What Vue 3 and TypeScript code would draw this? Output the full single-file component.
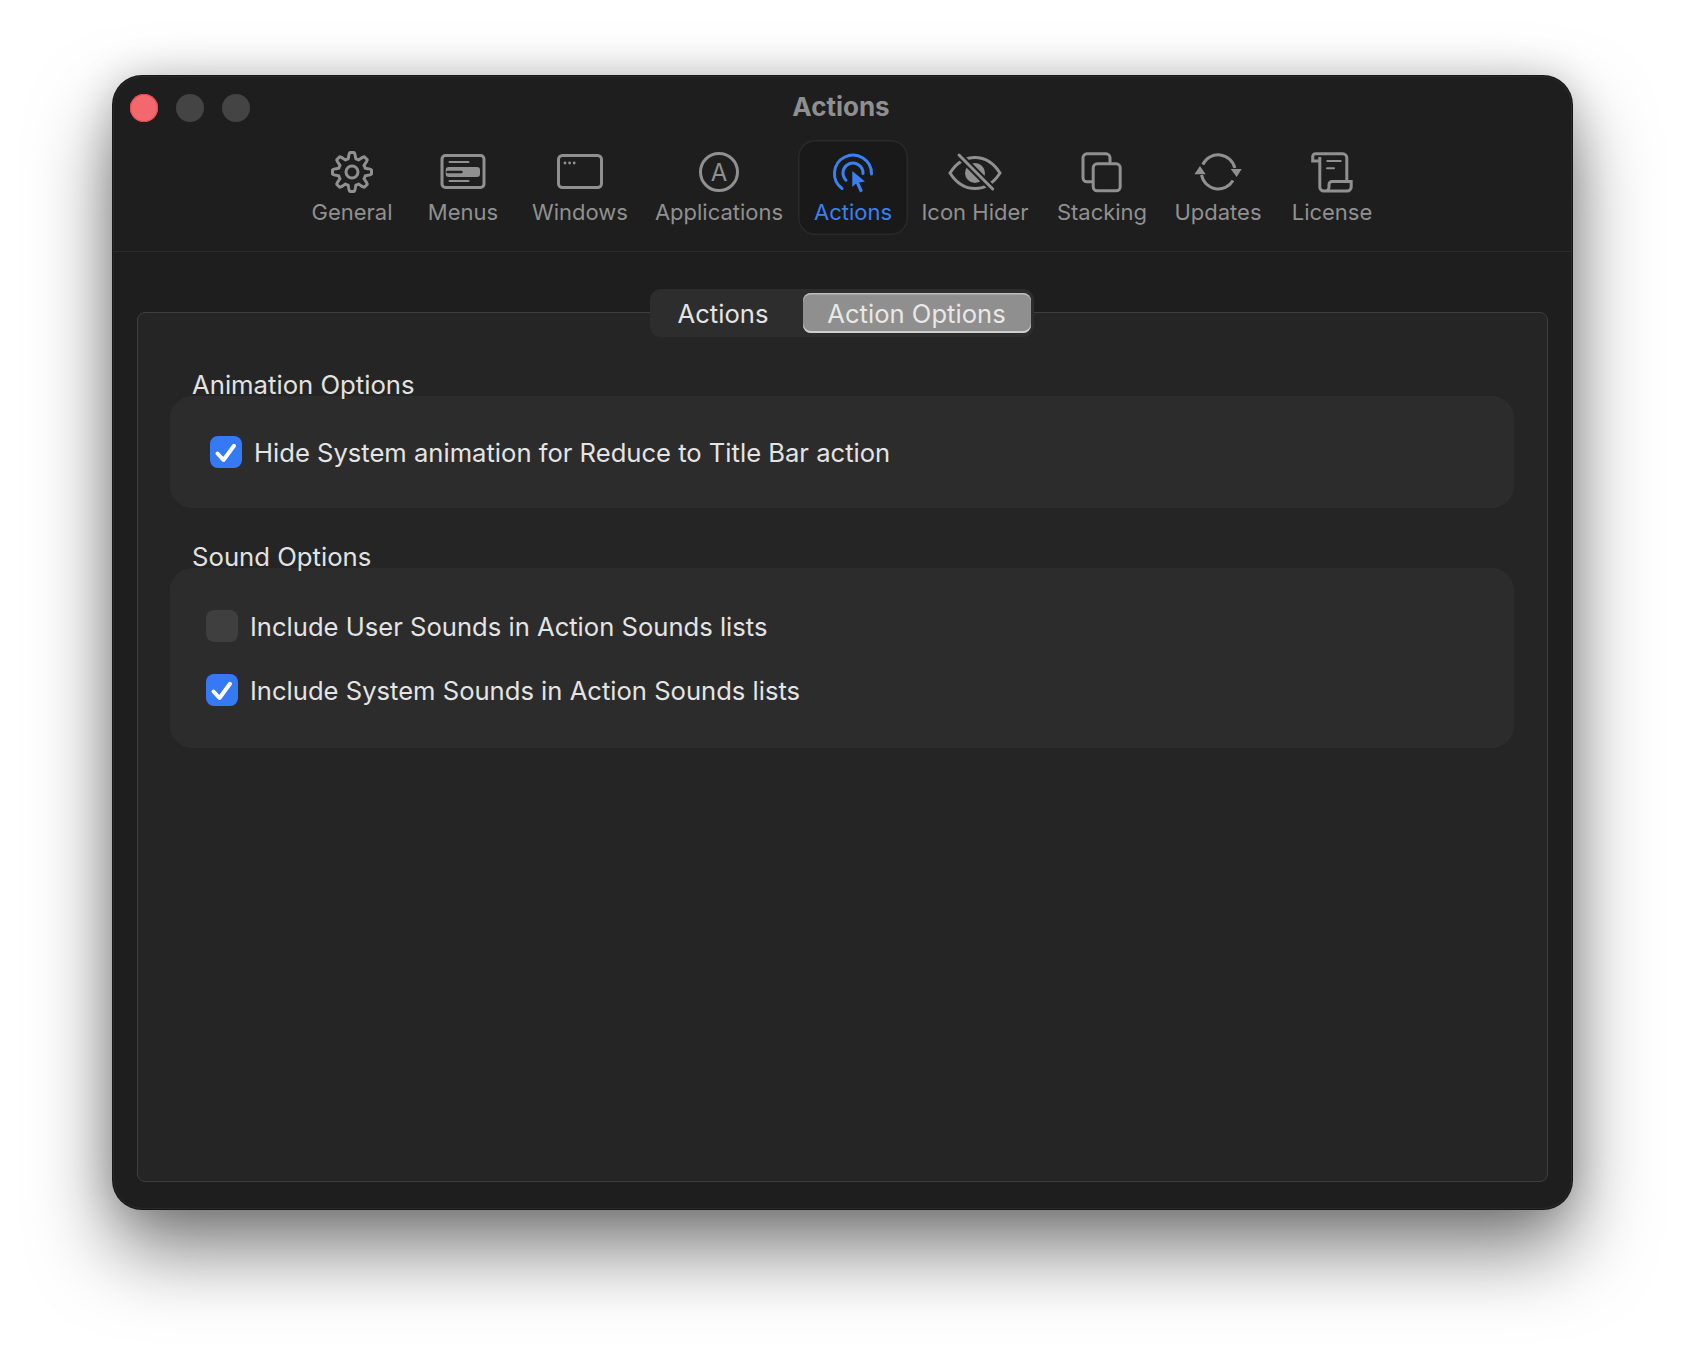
<script setup lang="ts">
const gear = (() => {
  const pts: string[] = []
  const n = 240
  for (let i = 0; i < n; i++) {
    const a = (i / n) * Math.PI * 2 + Math.PI / 2
    const c = Math.cos(8 * (a - Math.PI / 2))
    const s = Math.max(-1, Math.min(1, c * 1.7))
    const r = 16.6 + 2.9 * s
    pts.push(`${(25 + r * Math.cos(a)).toFixed(2)} ${(25 + r * Math.sin(a)).toFixed(2)}`)
  }
  return 'M' + pts.join('L') + 'Z'
})()

const tools = [
  { id: 'general', label: 'General' },
  { id: 'menus', label: 'Menus' },
  { id: 'windows', label: 'Windows' },
  { id: 'applications', label: 'Applications' },
  { id: 'actions', label: 'Actions' },
  { id: 'hider', label: 'Icon Hider' },
  { id: 'stacking', label: 'Stacking' },
  { id: 'updates', label: 'Updates' },
  { id: 'license', label: 'License' },
]
</script>

<template>
  <div class="page">
    <div class="window">
      <header class="header">
        <div class="titlebar">
          <div class="lights">
            <span class="light red"></span>
            <span class="light"></span>
            <span class="light"></span>
          </div>
          <div class="title">Actions</div>
        </div>
        <nav class="toolbar">
          <div v-for="t in tools" :key="t.id" class="tool" :class="{ active: t.id === 'actions' }">
            <svg class="icon" viewBox="0 0 50 50" width="50" height="50">
              <template v-if="t.id === 'general'">
                <path :d="gear" class="ln" />
                <circle cx="25" cy="25" r="6" class="ln" />
              </template>
              <template v-else-if="t.id === 'menus'">
                <rect x="4" y="8.5" width="42" height="32" rx="3.5" class="ln" />
                <rect x="7.7" y="20" width="34.3" height="10" rx="3" class="fl" />
                <path d="M9.5 25H23.5" class="gap" />
                <path d="M11.5 15H30.5M11.5 34H30.5" class="ln thin" />
              </template>
              <template v-else-if="t.id === 'windows'">
                <rect x="3.5" y="8.5" width="43" height="32" rx="4" class="ln" />
                <circle cx="10" cy="16" r="1.4" class="fl" />
                <circle cx="14.6" cy="16" r="1.4" class="fl" />
                <circle cx="19.2" cy="16" r="1.4" class="fl" />
              </template>
              <template v-else-if="t.id === 'applications'">
                <circle cx="25" cy="25" r="18.5" class="ln" />
                <text x="25" y="33.7" class="glyph" text-anchor="middle">A</text>
              </template>
              <template v-else-if="t.id === 'actions'">
                <path d="M14 41.5A18.5 18.5 0 1 1 43.5 27" class="ln round" />
                <path d="M18 33.2A10 10 0 1 1 35 26.5" class="ln round" />
                <path d="M24.3 24L24.3 40L28 36.5L32 45.5L35 44L31 35.5L37 34.5Z" class="fl" />
              </template>
              <template v-else-if="t.id === 'hider'">
                <path d="M0 26C7 15 16 10.5 25 10.5C34 10.5 43 15 50 26C43 37 34 41.5 25 41.5C16 41.5 7 37 0 26Z" class="ln" />
                <circle cx="25" cy="26" r="10" class="fl" />
                <path d="M9 8L42.7 42" class="gap wide" />
                <path d="M9 8L42.7 42" class="ln round" />
              </template>
              <template v-else-if="t.id === 'stacking'">
                <path d="M16 34.8H10a4 4 0 0 1-4-4V10.8a4 4 0 0 1 4-4H29a4 4 0 0 1 4 4V16" class="ln" />
                <rect x="16.2" y="16.8" width="27" height="27" rx="4" class="ln" />
              </template>
              <template v-else-if="t.id === 'updates'">
                <path d="M9.8 17.7A17 17 0 0 1 41.8 21" class="ln" />
                <path d="M8.6 28A17 17 0 0 0 40 33.5" class="ln" />
                <path d="M37.7 22H48.7L43.7 30Z" class="fl" />
                <path d="M7 19L1.3 27.3H12.7Z" class="fl" />
              </template>
              <template v-else>
                <path d="M39.8 33.5V10.8a4 4 0 0 0-4-4H8.5a2.8 2.8 0 0 0-2.8 2.8V14H12.8" class="ln" />
                <path d="M12.8 10V40a4 4 0 0 0 4 4H40a4 4 0 0 0 4.2-4V34.5H25a3 3 0 0 0-3 3V40a4 4 0 0 1-4 4" class="ln" />
                <path d="M20.3 14H33.7M20 21.3H27" class="ln thin" />
              </template>
            </svg>
            <span class="tool-label">{{ t.label }}</span>
          </div>
        </nav>
      </header>

      <main class="main">
        <section class="box">
          <div class="tabs">
            <div class="tab first">Actions</div>
            <div class="tab selected">Action Options</div>
          </div>

          <h2 class="heading first-heading">Animation Options</h2>
          <div class="group one">
            <label class="row">
              <span class="check on">
                <svg viewBox="0 0 32 32" width="32" height="32"><path d="M7.5 17.5L13.5 24L24 9.8" /></svg>
              </span>
              <span>Hide System animation for Reduce to Title Bar action</span>
            </label>
          </div>

          <h2 class="heading second-heading">Sound Options</h2>
          <div class="group two">
            <label class="row">
              <span class="check"></span>
              <span>Include User Sounds in Action Sounds lists</span>
            </label>
            <label class="row">
              <span class="check on">
                <svg viewBox="0 0 32 32" width="32" height="32"><path d="M7.5 17.5L13.5 24L24 9.8" /></svg>
              </span>
              <span>Include System Sounds in Action Sounds lists</span>
            </label>
          </div>
        </section>
      </main>
    </div>
  </div>
</template>

<style>
html, body { margin: 0; background: #fff; }
</style>

<style scoped>
.page {
  width: 1684px;
  height: 1358px;
  box-sizing: border-box;
  padding: 76px 112px 0 113px;
  background: #fff;
  font-family: Inter, "Liberation Sans", sans-serif;
  overflow: hidden;
}
.window {
  height: 1132.5px;
  border-radius: 29px;
  background: #1e1e1e;
  box-shadow: 0 0 0 1px #161616, inset 0 0 0 1px rgba(255, 255, 255, 0.05), 0 40px 80px rgba(0, 0, 0, 0.52), 0 0 40px rgba(0, 0, 0, 0.18);
  display: flex;
  flex-direction: column;
  overflow: hidden;
}
.header {
  height: 176px;
  box-sizing: border-box;
  border-bottom: 1px solid #2b2b2b;
}
.titlebar {
  height: 64px;
  position: relative;
  display: flex;
  align-items: center;
  justify-content: center;
}
.lights {
  position: absolute;
  left: 17px;
  top: 18px;
  display: flex;
  gap: 18px;
}
.light {
  width: 28px;
  height: 28px;
  border-radius: 50%;
  background: #444;
}
.light.red {
  background: #f2686c;
  box-shadow: inset 0 0 0 1px #e8474c;
}
.title {
  margin-top: -3px;
  margin-right: 3px;
  font-size: 26px;
  font-weight: 700;
  color: #8f8f8f;
}
.toolbar {
  display: grid;
  grid-template-columns: 108px 114px 120px 158px 110px 134px 120px 112px 116px;
  padding-left: 185px;
}
.tool {
  height: 95px;
  box-sizing: border-box;
  padding-top: 7px;
  display: flex;
  flex-direction: column;
  align-items: center;
  color: #909090;
  border-radius: 17px;
}
.tool.active {
  color: #3a80f2;
  background: #191919;
  box-shadow: inset 0 0 0 1.5px #2a2a2a;
}
.icon {
  flex: none;
  overflow: visible;
}
.ln {
  fill: none;
  stroke: currentColor;
  stroke-width: 3;
}
.ln.round { stroke-linecap: round; }
.ln.thin { stroke-width: 2; stroke-linecap: round; }
.fl { fill: currentColor; }
.gap {
  fill: none;
  stroke: #1e1e1e;
  stroke-width: 2.4;
  stroke-linecap: round;
}
.gap.wide { stroke-width: 7; stroke-linecap: butt; }
.glyph {
  fill: currentColor;
  font-size: 24px;
  font-family: Inter, sans-serif;
}
.tool-label {
  margin-top: 0.5px;
  font-size: 22px;
  line-height: 28px;
  white-space: nowrap;
}
.main {
  flex: 1;
  padding: 60px 24px 27px;
  display: flex;
  min-height: 0;
}
.box {
  flex: 1;
  box-sizing: border-box;
  border: 1.5px solid #3e3e3e;
  border-radius: 8px;
  padding: 0 33px 0 32px;
  background: #252525;
}
.tabs {
  width: 384px;
  height: 48px;
  box-sizing: border-box;
  margin: -24px 0 0 479.5px;
  padding: 4px 3px 4px 0;
  display: flex;
  background: #2d2d2d;
  border-radius: 11px;
  color: #e4e4e4;
  font-size: 25.6px;
}
.tab {
  flex: 1;
  display: flex;
  align-items: center;
  justify-content: center;
}
.tab.first { padding-right: 6px; }
.tab.selected {
  flex: none;
  width: 228px;
  border-radius: 8px;
  color: #e8e8e8;
  background: #8f8f8f;
  box-shadow: inset 0 1.5px 0 #bdbdbd, inset 0 -2px 0 #cfcfcf;
}
.heading {
  position: relative;
  z-index: 1;
  margin: 0 0 0 22px;
  height: 23px;
  font-size: 25.7px;
  line-height: 24px;
  font-weight: 400;
  color: #e2e2e2;
  white-space: nowrap;
}
.first-heading { margin-top: 36px; }
.second-heading { margin-top: 37px; }
.group {
  position: relative;
  background: #2c2c2c;
  border-radius: 22px;
  display: flex;
  flex-direction: column;
  color: #e4e4e4;
  font-size: 25.6px;
}
.group.one { height: 112px; padding-left: 40px; justify-content: center; }
.group.two { height: 180px; padding-left: 36px; justify-content: center; gap: 32px; }
.row {
  display: flex;
  align-items: center;
  gap: 12px;
  height: 32px;
  white-space: nowrap;
}
.row > span:last-child { position: relative; top: 0.5px; }
.check {
  width: 32px;
  height: 32px;
  flex: none;
  border-radius: 8px;
  background: #3f3f3f;
}
.check.on { background: #3679f5; }
.check svg { display: block; }
.check path {
  fill: none;
  stroke: #fff;
  stroke-width: 4;
  stroke-linecap: round;
  stroke-linejoin: round;
}
</style>
